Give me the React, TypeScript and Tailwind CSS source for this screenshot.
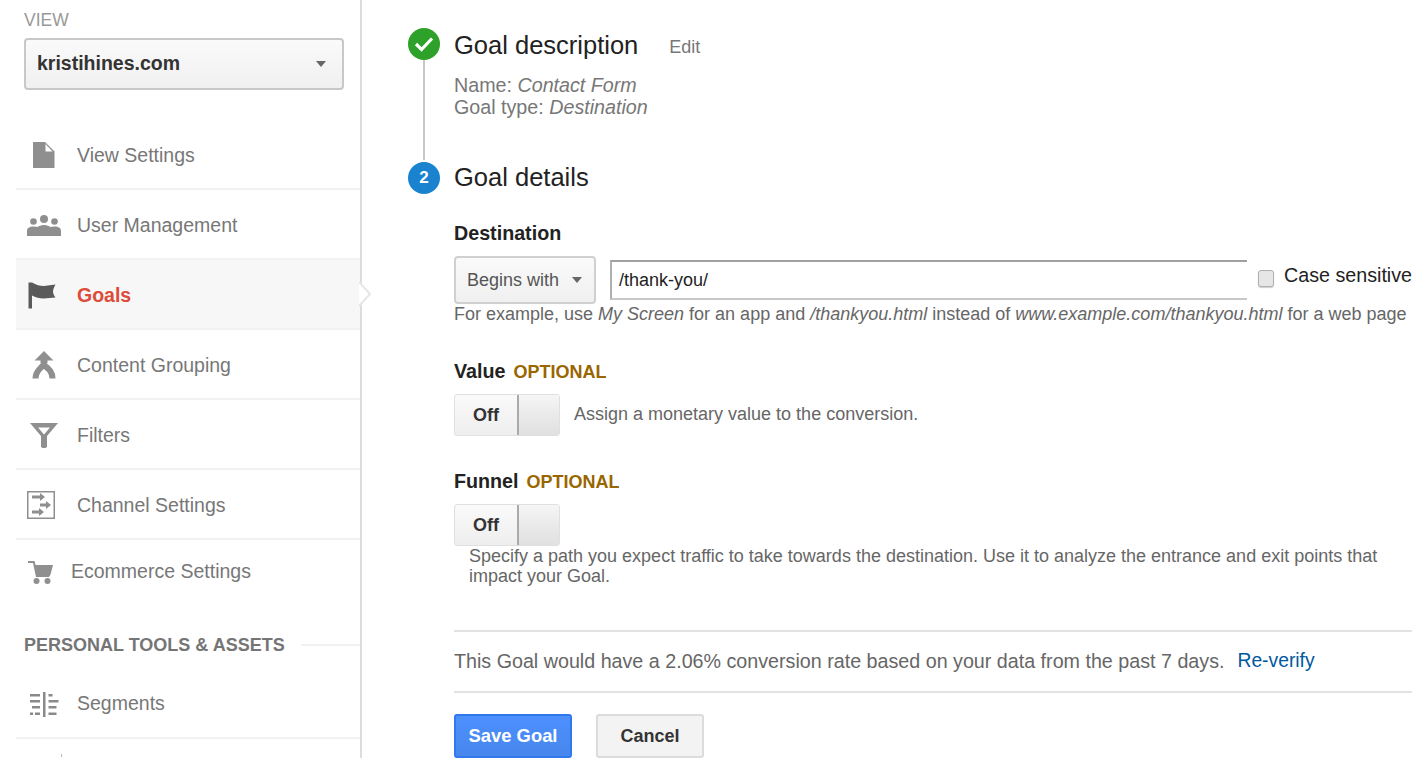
import type { ReactNode } from 'react';

const FONT = "font-['Liberation_Sans',Arial,sans-serif]";

function Caret({ className = '' }: { className?: string }) {
  return (
    <svg width="10" height="6" viewBox="0 0 10 6" className={className}>
      <path d="M0 0h10L5 6z" fill="#666" />
    </svg>
  );
}

const icons: Record<string, ReactNode> = {
  file: (
    <svg width="22" height="26" viewBox="0 0 22 26">
      <path d="M0 0h12l9.500 9.500V26H0z" fill="#8f8f8f" />
      <path d="M12.500 2L19.500 9.500H12.500z" fill="#fff" />
    </svg>
  ),
  users: (
    <svg width="34" height="21" viewBox="0 0 34 21">
      <g fill="#8f8f8f">
        <circle cx="6.500" cy="6.500" r="3.300" />
        <circle cx="17" cy="4" r="4" />
        <circle cx="27.500" cy="6.500" r="3.300" />
        <path d="M0 21v-5c0-3 2-4.500 7-4.500 1.500 0 2.500.2 3.500.5 1.500-1 3.500-2 6.500-2s5 1 6.500 2c1-.3 2-.5 3.500-.5 5 0 7 1.500 7 4.500v5z" />
      </g>
    </svg>
  ),
  flag: (
    <svg width="28" height="28" viewBox="0 0 28 28">
      <path d="M0.500 1.500h3.500v26H0.500z" fill="#5a5a5a" />
      <path d="M4 1.500c4 2.500 8 3.500 12 3.500l11.500-1.500c-1.500 3-2.500 5-2.500 7s1 4 2.500 6l-12 1c-4 0-8-1-11.500-3z" fill="#5a5a5a" />
    </svg>
  ),
  merge: (
    <svg width="24" height="28" viewBox="0 0 24 28">
      <path d="M12 0l9.500 9.500H15.500V12H8.500V9.500H2.500z" fill="#8f8f8f" />
      <path d="M12 9v3c0 4-8.500 6-8.500 15.500M13 15c4 3 7.500 6 7.500 12.500" fill="none" stroke="#8f8f8f" strokeWidth="6" />
    </svg>
  ),
  filter: (
    <svg width="28" height="25" viewBox="0 0 28 25">
      <path d="M0 0h28l-11 13v11l-1.500 1h-3L11 24V13z" fill="#8f8f8f" />
      <path d="M8 4.500h12l-6 7z" fill="#fff" />
    </svg>
  ),
  channel: (
    <svg width="28" height="28" viewBox="0 0 28 28">
      <rect x="0.750" y="0.750" width="26.500" height="26.500" fill="none" stroke="#8f8f8f" strokeWidth="1.500" />
      <g fill="#8f8f8f">
        <path d="M5 4.500h8V2l5 4-5 4V7.500H5z" />
        <path d="M13 12.500h6V10l5 4-5 4v-2.500h-6z" />
        <path d="M5 19.500h7V17l5 4-5 4v-2.500H5z" />
      </g>
    </svg>
  ),
  cart: (
    <svg width="25" height="23" viewBox="0 0 25 23">
      <g fill="#8f8f8f">
        <path d="M0 0h6.500l1 4H25l-2.500 9.500L21 16H8L5 2H0z" />
        <circle cx="8.500" cy="20" r="3" />
        <circle cx="19.500" cy="20" r="3" />
      </g>
    </svg>
  ),
  segments: (
    <svg width="30" height="25" viewBox="0 0 30 25">
      <g fill="#8a8a8a">
        <path d="M14 0h2.500v25H14zM1 2h10v2.500H1zM1 8h10v2.500H1zM3 14h8v2.500H3zM1 20.500h3v2.500H1zM6 20.500h5v2.500H6zM19.500 2h4v2.500h-4zM19.500 8h10v2.500h-10zM19.500 14h8v2.500h-8zM19.500 20.500h8v2.500h-8z" />
      </g>
    </svg>
  ),
};

function NavRow({
  icon,
  label,
  active,
  iconPad = 'pr-[6px]',
  labelPad = 'mt-[2px]',
}: {
  icon: string;
  label: string;
  active?: boolean;
  iconPad?: string;
  labelPad?: string;
}) {
  return (
    <div className={`relative flex h-[70px] items-center border-b-2 border-[#f2f2f2] pt-[2px] ${active ? 'bg-[#f7f7f7]' : ''}`}>
      <div className={`flex w-[61px] shrink-0 justify-center ${iconPad}`}>{icons[icon]}</div>
      <span className={`text-[19.500px] ${labelPad} ${active ? 'font-bold text-[#dd4b39]' : 'text-[#777]'}`}>{label}</span>
      {active && (
        <svg width="13" height="26" viewBox="0 0 13 26" className="absolute right-[-12px] top-[21px]">
          <path d="M0 0l11 13L0 26z" fill="#fff" />
          <path d="M0 1l11 12L0 25" fill="none" stroke="#e6e6e6" strokeWidth="2" />
        </svg>
      )}
    </div>
  );
}

function Sidebar() {
  return (
    <aside className="h-full w-[362px] shrink-0 border-r-2 border-[#dcdcdc]">
      <div className="pl-[24px] pr-[16px] pt-[11px]">
        <div className="text-[17.500px] leading-[18px] text-[#999]">VIEW</div>
        <div className="mt-[9px] flex h-[52px] w-[320px] items-center justify-between rounded-[4px] border-2 border-[#c8c8c8] bg-gradient-to-b from-[#fafafa] to-[#f0f0f0] pl-[11px] pr-[16px]">
          <span className="text-[19.500px] font-bold text-[#333]">kristihines.com</span>
          <Caret />
        </div>
      </div>
      <div className="mt-[30px] pl-[16px]">
        <NavRow icon="file" label="View Settings" />
        <NavRow icon="users" label="User Management" />
        <NavRow icon="flag" label="Goals" active iconPad="pr-[9px]" />
        <NavRow icon="merge" label="Content Grouping" />
        <NavRow icon="filter" label="Filters" />
        <NavRow icon="channel" label="Channel Settings" iconPad="pr-[11px]" />
        <div className="flex h-[64px] items-center">
          <div className="flex w-[55px] shrink-0 justify-center pr-[7px]">{icons.cart}</div>
          <span className="text-[19.500px] text-[#777]">Ecommerce Settings</span>
        </div>
      </div>
      <div className="mt-[29px] flex items-center pl-[24px]">
        <span className="text-[18px] font-bold leading-[24px] text-[#757575]">PERSONAL TOOLS &amp; ASSETS</span>
        <span className="ml-[16px] h-[2px] flex-1 bg-[#f2f2f2]" />
      </div>
      <div className="mt-[12px] pl-[16px]">
        <NavRow icon="segments" label="Segments" labelPad="" />
        <div className="ml-[45px] mt-[15px] h-[3px] w-[1px] bg-[#b8b4d0]" />
      </div>
    </aside>
  );
}

function Toggle() {
  return (
    <div className="flex h-[42px] w-[106px] shrink-0 overflow-hidden rounded-[3px] border border-[#e0e0e0] bg-gradient-to-b from-[#fafafa] to-[#eeeeee]">
      <div className="flex w-[62px] items-center justify-center text-[18px] font-bold text-[#333]">Off</div>
      <div className="flex-1 border-l-2 border-[#aaa] bg-gradient-to-b from-[#f5f5f5] to-[#e0e0e0]" />
    </div>
  );
}

function Label({ text, optional, className = '' }: { text: string; optional?: boolean; className?: string }) {
  return (
    <div className={`flex items-baseline gap-[8px] leading-[24px] ${className}`}>
      <span className="text-[19.700px] font-bold text-[#222]">{text}</span>
      {optional && <span className="text-[18px] font-bold text-[#996600]">OPTIONAL</span>}
    </div>
  );
}

function Main() {
  return (
    <main className="ml-[46px] w-[1004px] shrink-0 pt-[28px]">
      <div className="flex">
        <div className="flex w-[32px] shrink-0 flex-col items-center">
          <div className="flex h-[32px] w-[32px] items-center justify-center rounded-full bg-[#2ea12b]">
            <svg width="20" height="16" viewBox="0 0 20 16">
              <path d="M2 8l5.500 5.500L18 2.500" fill="none" stroke="#fff" strokeWidth="3.200" />
            </svg>
          </div>
          <div className="h-[100px] w-[2px] bg-[#c8c8c8]" />
        </div>
        <div className="ml-[14px]">
          <div className="-mt-[1px] flex items-center">
            <span className="text-[25.500px] leading-[36px] text-[#222]">Goal description</span>
            <span className="ml-[31px] mt-[4px] text-[18px] text-[#777]">Edit</span>
          </div>
          <div className="mt-[11px] text-[19.700px] leading-[22px] text-[#777]">
            <div>Name: <em>Contact Form</em></div>
            <div>Goal type: <em>Destination</em></div>
          </div>
        </div>
      </div>
      <div className="flex items-center">
        <div className="flex h-[32px] w-[32px] items-center justify-center rounded-full bg-[#1a83d0] text-[17px] font-bold text-white">2</div>
        <span className="ml-[14px] pb-[2px] text-[25.500px] leading-[34px] text-[#222]">Goal details</span>
      </div>
      <div className="ml-[46px]">
        <Label text="Destination" className="mt-[25px]" />
        <div className="mt-[11px] flex items-center">
          <div className="flex h-[48px] w-[142px] shrink-0 items-center justify-between rounded-[4px] border-2 border-[#d0d0d0] bg-gradient-to-b from-[#fafafa] to-[#f0f0f0] pl-[11px] pr-[12px] text-[18px] text-[#555]">
            <span>Begins with</span>
            <Caret />
          </div>
          <div className="ml-[14px] flex h-[40px] w-[637px] shrink-0 items-center border-b-2 border-l-2 border-t-2 border-b-[#c8c8c8] border-l-[#b0b0b0] border-t-[#a0a0a0] pl-[7px] text-[18px] text-[#222]">/thank-you/</div>
          <div className="-mt-[4px] ml-[11px] h-[17px] w-[16px] shrink-0 rounded-[3px] border border-[#b0b0b0] bg-[#e6e6e6] shadow-[0_1px_1px_rgba(0,0,0,0.2)]" />
          <span className="-mt-[8px] ml-[10px] whitespace-nowrap text-[19.700px] text-[#222]">Case sensitive</span>
        </div>
        <div className="whitespace-nowrap text-[18px] leading-[20px] text-[#666]">
          For example, use <em>My Screen</em> for an app and <em>/thankyou.html</em> instead of <em>www.example.com/thankyou.html</em> for a web page
        </div>
        <Label text="Value" optional className="mt-[35px]" />
        <div className="mt-[10px] flex items-center">
          <Toggle />
          <span className="ml-[14px] pb-[2px] text-[18px] text-[#666]">Assign a monetary value to the conversion.</span>
        </div>
        <Label text="Funnel" optional className="mt-[33px]" />
        <div className="mt-[10px]"><Toggle /></div>
        <div className="ml-[15px] w-[930px] text-[18px] leading-[20px] text-[#666]">
          Specify a path you expect traffic to take towards the destination. Use it to analyze the entrance and exit points that impact your Goal.
        </div>
        <div className="mt-[44px] flex h-[63px] w-[958px] items-center border-y-2 border-[#e2e2e2] text-[19.700px] text-[#666]">
          <span>This Goal would have a 2.06% conversion rate based on your data from the past 7 days.</span>
          <span className="ml-[13px] text-[19.300px] text-[#00589f]">Re-verify</span>
        </div>
        <div className="mt-[21px] flex gap-[24px]">
          <div className="flex h-[44px] w-[118px] items-center justify-center rounded-[3px] border-2 border-[#3079ed] bg-gradient-to-b from-[#4d90fe] to-[#4787ed] text-[18.400px] font-bold text-white">Save Goal</div>
          <div className="flex h-[44px] w-[108px] items-center justify-center rounded-[3px] border-2 border-[#dcdcdc] bg-[#f3f3f3] text-[18px] font-bold text-[#333]">Cancel</div>
        </div>
      </div>
    </main>
  );
}

export default function App() {
  return (
    <div className={`flex h-[758px] w-[1426px] overflow-hidden bg-white ${FONT}`}>
      <Sidebar />
      <Main />
    </div>
  );
}
